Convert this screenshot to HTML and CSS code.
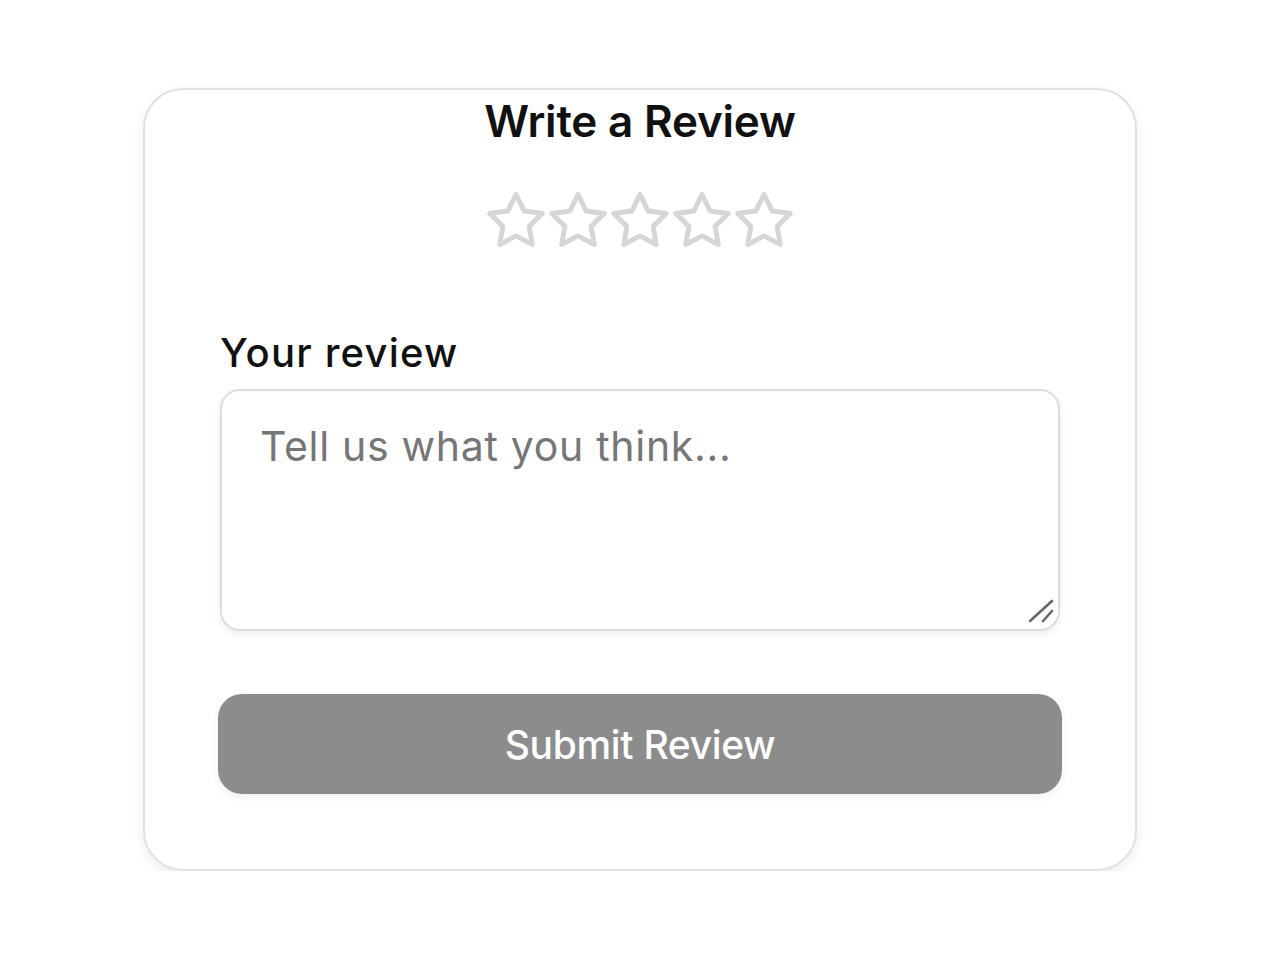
FILE: index.html
```html
<!DOCTYPE html>
<html lang="en">
<head>
<meta charset="utf-8">
<title>Write a Review</title>
<link rel="stylesheet" href="styles.css">
</head>
<body>
<div class="page">
  <form class="card">
    <h1 class="title">Write a Review</h1>
    <div class="stars">
      <svg class="star" viewBox="0 0 62 56"><polygon points="31,2.5 39.11,18.94 57.25,21.57 44.12,34.36 47.22,52.43 31,43.9 14.78,52.43 17.88,34.36 4.75,21.57 22.89,18.94"/></svg>
      <svg class="star" viewBox="0 0 62 56"><polygon points="31,2.5 39.11,18.94 57.25,21.57 44.12,34.36 47.22,52.43 31,43.9 14.78,52.43 17.88,34.36 4.75,21.57 22.89,18.94"/></svg>
      <svg class="star" viewBox="0 0 62 56"><polygon points="31,2.5 39.11,18.94 57.25,21.57 44.12,34.36 47.22,52.43 31,43.9 14.78,52.43 17.88,34.36 4.75,21.57 22.89,18.94"/></svg>
      <svg class="star" viewBox="0 0 62 56"><polygon points="31,2.5 39.11,18.94 57.25,21.57 44.12,34.36 47.22,52.43 31,43.9 14.78,52.43 17.88,34.36 4.75,21.57 22.89,18.94"/></svg>
      <svg class="star" viewBox="0 0 62 56"><polygon points="31,2.5 39.11,18.94 57.25,21.57 44.12,34.36 47.22,52.43 31,43.9 14.78,52.43 17.88,34.36 4.75,21.57 22.89,18.94"/></svg>
    </div>
    <label class="label" for="review">Your review</label>
    <div class="field">
      <textarea id="review" class="textarea" placeholder="Tell us what you think..."></textarea>
      <svg class="grip" viewBox="0 0 26 26"><line x1="2" y1="23" x2="24" y2="3"/><line x1="15" y1="23" x2="24" y2="13"/></svg>
    </div>
    <button type="button" class="submit">Submit Review</button>
  </form>
</div>
</body>
</html>
```

FILE: styles.css
```css
* { box-sizing: border-box; }
html, body { margin: 0; padding: 0; background: #ffffff; }
body { font-family: Inter, "Noto Sans", "Liberation Sans", sans-serif; color: #111111; }

.page {
  display: flex;
  justify-content: center;
  padding-top: 88px;
}

.card {
  width: 994px;
  height: 783px;
  border: 2px solid #e1e1e1;
  border-radius: 40px;
  box-shadow: 0 4px 12px rgba(0, 0, 0, 0.08);
  padding: 5px 75px 0 75px;
  display: flex;
  flex-direction: column;
}

.title {
  margin: 0;
  text-align: center;
  font-size: 44px;
  line-height: 52px;
  font-weight: 600;
  color: #111111;
  letter-spacing: -0.2px;
}

.stars {
  display: flex;
  justify-content: center;
  margin-top: 45px;
}

.star {
  width: 62px;
  height: 56px;
  display: block;
}
.star polygon {
  fill: none;
  stroke: #d6d6d6;
  stroke-width: 5;
  stroke-linejoin: round;
}

.label {
  display: block;
  margin-top: 81px;
  font-size: 40px;
  line-height: 48px;
  font-weight: 500;
  color: #111111;
  letter-spacing: 1.2px;
}

.field {
  position: relative;
  margin-top: 12px;
}

.textarea {
  display: block;
  width: 840px;
  height: 242px;
  border: 2px solid #dedede;
  border-radius: 20px;
  box-shadow: 0 3px 8px rgba(0, 0, 0, 0.07);
  padding: 31px 38px;
  font-family: inherit;
  font-size: 41px;
  line-height: 49px;
  letter-spacing: 0.7px;
  color: #111111;
  resize: none;
  outline: none;
  background: #ffffff;
}
.textarea::placeholder { color: #767676; }

.grip {
  position: absolute;
  right: 6px;
  bottom: 7px;
  width: 26px;
  height: 26px;
}
.grip line {
  stroke: #666666;
  stroke-width: 2.6;
  stroke-linecap: round;
}

.submit {
  margin: 63px -2px 0 -2px;
  height: 100px;
  border: none;
  border-radius: 24px;
  background: #8c8c8c;
  color: #ffffff;
  font-family: inherit;
  font-size: 39px;
  font-weight: 500;
  letter-spacing: -0.3px;
  box-shadow: 0 3px 8px rgba(0, 0, 0, 0.06);
}
```
